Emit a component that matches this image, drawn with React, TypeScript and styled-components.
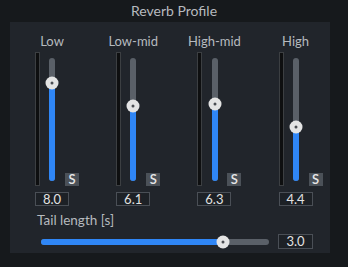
import React from "react";
import styled, { createGlobalStyle } from "styled-components";

const GlobalStyle = createGlobalStyle`
  html, body { margin: 0; padding: 0; background: #16191c; }
  body { font-family: Lato, "Noto Sans", sans-serif; }
`;

const Root = styled.div`
  width: 348px;
  height: 267px;
  background: #16191c;
  overflow: hidden;
`;

const TitleBar = styled.div`
  height: 22px;
  line-height: 22px;
  text-align: center;
  color: #b6babf;
  font-size: 14px;
`;

const Panel = styled.div`
  margin-left: 10px;
  width: 320px;
  height: 231px;
  background: #21252b;
  box-sizing: border-box;
  padding-top: 11px;
`;

const BandGrid = styled.div`
  display: grid;
  grid-template-columns: repeat(4, 81.2px);
  padding-left: 25px;
`;

const Column = styled.div`
  width: 34px;
  display: flex;
  flex-direction: column;
`;

const BandLabel = styled.div`
  width: 34px;
  text-align: center;
  white-space: nowrap;
  display: flex;
  justify-content: center;
  color: #b6babf;
  font-size: 13px;
  line-height: 16px;
  height: 16px;
  margin-bottom: 3px;
`;

const SliderRow = styled.div`
  display: flex;
  align-items: flex-end;
  height: 134px;
  width: 44px;
`;

const Meter = styled.div`
  width: 5px;
  height: 134px;
  box-sizing: border-box;
  border: 1px solid #3c3f42;
  background: #0e0f10;
  flex-shrink: 0;
`;

const VTrack = styled.div`
  position: relative;
  width: 6px;
  height: 123px;
  margin: 0 9.7px 5px 9.3px;
  border-radius: 3px;
  background: #5a6068;
  flex-shrink: 0;
`;

const VFill = styled.div`
  position: absolute;
  left: 0;
  right: 0;
  bottom: 0;
  border-radius: 0 0 3px 3px;
  background: #2f86f6;
`;

const Thumb = styled.div`
  position: absolute;
  width: 13px;
  height: 13px;
  border-radius: 50%;
  background: #e4e4e4;
  transform: translate(-50%, -50%);
  display: flex;
  align-items: center;
  justify-content: center;
  &::after {
    content: "";
    width: 3px;
    height: 3px;
    border-radius: 50%;
    background: #4a4d52;
  }
`;

const SoloButton = styled.div`
  width: 14px;
  height: 13px;
  background: #4b5158;
  color: #e6e6e6;
  font-size: 13px;
  font-weight: 600;
  line-height: 13px;
  text-align: center;
  flex-shrink: 0;
`;

const ValueBox = styled.div<{ $width?: number }>`
  width: ${(p) => p.$width ?? 34}px;
  height: 14px;
  box-sizing: border-box;
  border: 1px solid #4a4f56;
  background: #1d2126;
  color: #e2e2e2;
  font-size: 13px;
  line-height: 12px;
  text-align: center;
  margin-top: 6px;
`;

const TailSection = styled.div`
  padding: 6px 0 0 27px;
`;

const TailLabel = styled.div`
  color: #b6babf;
  font-size: 13.5px;
  line-height: 16px;
  height: 16px;
`;

const TailRow = styled.div`
  display: flex;
  align-items: center;
  height: 15px;
  margin-top: 6px;
`;

const HTrack = styled.div`
  position: relative;
  width: 228px;
  height: 6px;
  margin: 0 9px 0 4px;
  border-radius: 3px;
  background: #5a6068;
`;

const HFill = styled.div`
  position: absolute;
  left: 0;
  top: 0;
  bottom: 0;
  border-radius: 3px 0 0 3px;
  background: #2f86f6;
`;

const TailValue = styled(ValueBox)`
  margin-top: 0;
  height: 15px;
  line-height: 13px;
`;

type Band = { label: string; value: number };
const bands: Band[] = [
  { label: "Low", value: 8.0 },
  { label: "Low-mid", value: 6.1 },
  { label: "High-mid", value: 6.3 },
  { label: "High", value: 4.4 },
];

const TRACK_H = 123;

function BandColumn({ band }: { band: Band }) {
  const fillH = (band.value / 10) * TRACK_H;
  return (
    <Column>
      <BandLabel>{band.label}</BandLabel>
      <SliderRow>
        <Meter />
        <VTrack>
          <VFill style={{ height: fillH }} />
          <Thumb style={{ left: 3, top: TRACK_H - fillH }} />
        </VTrack>
        <SoloButton>S</SoloButton>
      </SliderRow>
      <ValueBox>{band.value.toFixed(1)}</ValueBox>
    </Column>
  );
}

export default function App() {
  const tail = 3.0;
  const frac = 0.797;
  const w = 228 * frac;
  return (
    <Root>
      <GlobalStyle />
      <TitleBar>Reverb Profile</TitleBar>
      <Panel>
        <BandGrid>
          {bands.map((b) => (
            <BandColumn key={b.label} band={b} />
          ))}
        </BandGrid>
        <TailSection>
          <TailLabel>Tail length [s]</TailLabel>
          <TailRow>
            <HTrack>
              <HFill style={{ width: w }} />
              <Thumb style={{ left: w, top: 3 }} />
            </HTrack>
            <TailValue $width={35}>{tail.toFixed(1)}</TailValue>
          </TailRow>
        </TailSection>
      </Panel>
    </Root>
  );
}
